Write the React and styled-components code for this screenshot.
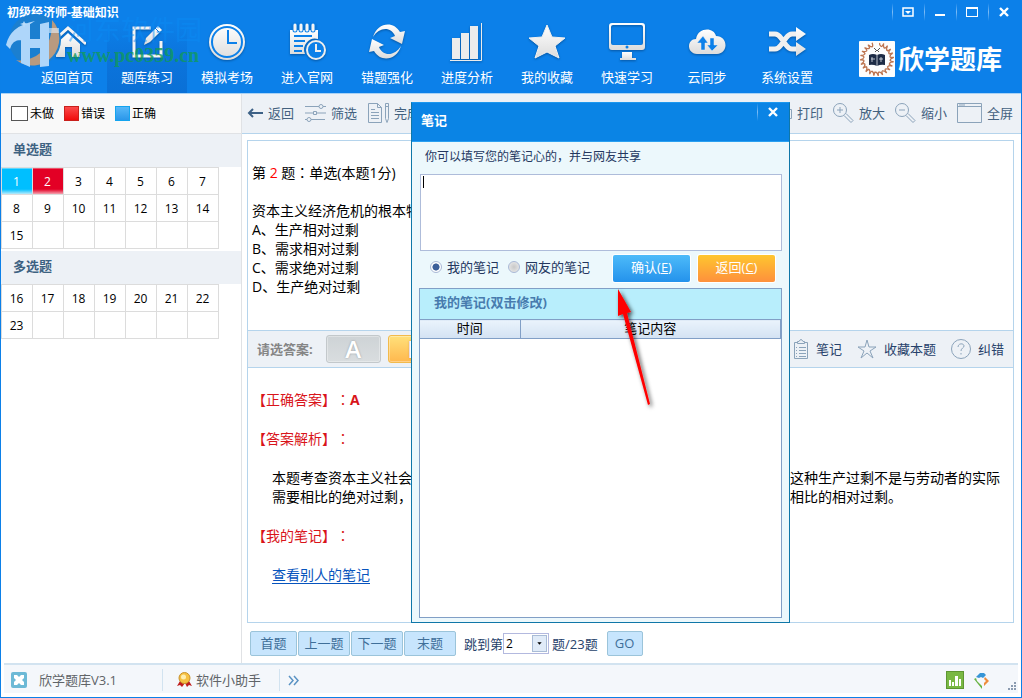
import React, { useState } from "react";
import styled, { createGlobalStyle, css } from "styled-components";

const GlobalStyle = createGlobalStyle`
  * {
    box-sizing: border-box;
  }
  body {
    margin: 0;
    background: #fff;
    color: #000;
    font-family: "Open Sans", "Noto Sans CJK SC", sans-serif;
    font-size: 13px;
    line-height: 18px;
    text-spacing-trim: space-all;
  }
  button, input, select, textarea {
    font: inherit;
    color: inherit;
    margin: 0;
  }
  button {
    padding: 0;
    border: 0;
    background: none;
    white-space: nowrap;
  }
`;

/* ---------- frame and header ---------- */

const Frame = styled.div`
  position: relative;
  display: flex;
  flex-direction: column;
  min-height: 100vh;
  border: solid #0c80e8;
  border-width: 0 1px 1px;
  overflow: hidden;
`;

const Header = styled.header`
  position: relative;
  background: #0c80e9;
  color: #fff;
  border-bottom: 1px solid #a9d2f5;
`;

const TitleBar = styled.div`
  display: flex;
  justify-content: space-between;
  height: 23px;
  padding: 0 1px 0 6px;
`;

const AppTitle = styled.h1`
  margin: 0;
  padding-top: 4px;
  font-size: 12px;
  line-height: 18px;
  font-weight: 700;
`;

const WindowControls = styled.div`
  display: flex;
`;

const ControlButton = styled.button`
  position: relative;
  width: 32px;
  height: 23px;
  display: grid;
  place-items: center;
  background: linear-gradient(#0c80e900, #7fbdf6 50%, #0c80e900) left center /
    1px 18px no-repeat;
`;

const NavRow = styled.nav`
  display: flex;
  align-items: stretch;
  padding-left: 26px;
  height: 70px;
`;

const NavButton = styled.button`
  width: 80px;
  display: flex;
  flex-direction: column;
  align-items: center;
  gap: 7px;
  ${(props) =>
    props.$active &&
    css`
      background: linear-gradient(#0c80e9, #0b74dc 50%, #0a70d6);
    `}

  svg {
    filter: drop-shadow(0 1px 1px #0656a3);
  }
`;

const Brand = styled.div`
  margin-left: auto;
  padding: 2px 19px 0 0;
  display: flex;
  align-items: center;
  gap: 3px;
  font-size: 26px;
  line-height: 36px;
  font-weight: 700;
  white-space: nowrap;
`;

const Watermark = styled.div`
  position: absolute;
  left: 4px;
  top: 12px;
  display: flex;
  align-items: center;
  gap: 4px;
  pointer-events: none;
`;

const WatermarkText = styled.div`
  display: flex;
  flex-direction: column;
  padding-top: 4px;
  font-size: 27px;
  line-height: 27px;
  color: #0a8cf577;
  white-space: nowrap;
`;

const WatermarkUrl = styled.span`
  font-family: "Liberation Serif", serif;
  font-size: 20px;
  line-height: 25px;
  font-weight: 700;
  color: #109a5acc;
`;

/* ---------- sidebar ---------- */

const Body = styled.div`
  flex: 1;
  display: grid;
  grid-template-columns: 241px minmax(0, 1fr);
`;

const Sidebar = styled.aside`
  border-right: 1px solid #e0e2e5;
`;

const Legend = styled.div`
  display: flex;
  align-items: center;
  gap: 10px;
  height: 40px;
  padding-left: 10px;
  background: #f9f9f9;
  border-bottom: 1px solid #e0e2e5;
  font-size: 12px;
`;

const LegendItem = styled.span`
  display: flex;
  align-items: center;
  gap: 2px;
`;

const swatches = {
  todo: "background: #fff; border-color: #555; width: 17px;",
  wrong: "background: linear-gradient(#fb4a4a, #f00c0c); border-color: #c8201c;",
  right: "background: linear-gradient(#58b8f8, #2a97ea); border-color: #14a4ef;",
};

const Swatch = styled.i`
  width: 15px;
  height: 15px;
  border: 1px solid;
  ${(props) => swatches[props.$kind]}
`;

const GroupTitle = styled.h2`
  margin: 0;
  padding: 0 12px;
  height: 33px;
  background: #edf1f6;
  color: #3d6282;
  font-size: 13px;
  line-height: 30px;
  font-weight: 700;
`;

const NumberTable = styled.table`
  border-collapse: collapse;
  margin-bottom: 2px;
`;

const cellStates = {
  right: "background: linear-gradient(#00bfff 80%, #c9f0fd); color: #fff;",
  wrong: "background: linear-gradient(#e30025 80%, #f7b4bf); color: #fff;",
};

const NumberCell = styled.td`
  width: 31px;
  height: 27px;
  padding: 1px 1px 0 0;
  border: 1px solid #dcdcdc;
  text-align: center;
  font-size: 12px;
  ${(props) => cellStates[props.$state]}
`;

/* ---------- main area ---------- */

const Main = styled.main`
  display: flex;
  flex-direction: column;
`;

const Toolbar = styled.div`
  display: flex;
  align-items: center;
  justify-content: space-between;
  height: 40px;
  padding: 0 8px 2px 5px;
  background: #edf1f6;
  border-bottom: 1px solid #b5d4ec;
`;

const ToolGroup = styled.div`
  display: flex;
  align-items: center;
  gap: ${(props) => props.$gap}px;
`;

const ToolButton = styled.button`
  display: flex;
  align-items: center;
  gap: 5px;
  color: #43617f;
`;

const Paper = styled.section`
  flex: 1;
  display: flex;
  flex-direction: column;
  margin: 6px 7px 8px 5px;
  border: 1px solid #b5d4ec;
`;

const Question = styled.div`
  height: 189px;
  padding: 22px 8px 0 4px;
  font-size: 14px;
  line-height: 19px;
  white-space: nowrap;
  overflow: hidden;
`;

const QuestionTitle = styled.p`
  margin: 0 0 19px;

  em {
    font-style: normal;
    color: #f00;
  }
`;

const OptionList = styled.ul`
  margin: 0;
  padding: 0;
  list-style: none;
`;

// Traditional-style colon sits in the middle of its box
const Colon = styled.span`
  font-family: "Noto Sans CJK TC", sans-serif;
`;

const AnswerBar = styled.div`
  display: flex;
  align-items: center;
  justify-content: space-between;
  height: 38px;
  padding: 0 9px;
  background: #edf1f6;
  border: solid #b5d4ec;
  border-width: 1px 0;
`;

const AnswerLabel = styled.span`
  margin-right: 6px;
  color: #858585;
  font-weight: 700;
`;

const AnswerButton = styled.button`
  width: 55px;
  height: 28px;
  border: 1px solid ${(props) => (props.$picked ? "#f2ba4c" : "#c3c8cb")};
  border-radius: 3px;
  background: ${(props) =>
    props.$picked
      ? "linear-gradient(#ffe07a, #ffb84e)"
      : "linear-gradient(#ced3d6, #d9dddf)"};
  box-shadow: inset 0 0 0 1px #ffffff55;
  color: #fff;
  font-size: 24px;
  line-height: 26px;
  font-weight: 600;
  text-shadow: 0 0 2px ${(props) => (props.$picked ? "#c98c00" : "#8f979c")};
`;

const DarkTool = styled(ToolButton)`
  gap: 7px;
  color: #27426b;
`;

const Explanation = styled.div`
  display: flex;
  flex-direction: column;
  gap: 20px;
  padding: 22px 8px 0 4px;
  font-size: 14px;
  line-height: 19px;
`;

const ExplainHead = styled.h3`
  margin: 0;
  font-size: 14px;
  font-weight: 400;
  color: #d9141a;
`;

const ExplainText = styled.p`
  margin: 0;
  padding-left: 20px;
`;

const NotesLink = styled.a`
  color: #0754bd;
  text-underline-offset: 3px;
`;

const Pager = styled.div`
  display: flex;
  align-items: center;
  gap: 1px;
  height: 25px;
  margin: 0 8px 7px;
  color: #27426b;
`;

const PagerButton = styled.button`
  width: ${(props) => props.$width || 52}px;
  height: 25px;
  padding-bottom: 2px;
  border: 1px solid #9bc4da;
  border-radius: 2px;
  background: #c7e5fd;
  color: #3f6f99;
`;

const JumpLabel = styled.label`
  display: flex;
  align-items: center;
  margin: 0 8px 0 7px;
`;

const SelectBox = styled.span`
  display: grid;
  align-items: center;
  width: 46px;
  height: 21px;
  margin-right: 3px;
  border: 1px solid #b3b9df;
  background: #fff;

  > * {
    grid-area: 1 / 1;
  }
`;

const JumpSelect = styled.select`
  appearance: none;
  width: 100%;
  height: 19px;
  padding: 0 0 0 2px;
  border: 0;
  background: none;
  color: #000;
  font-size: 12px;
  line-height: 18px;
`;

const SelectArrow = styled.svg`
  justify-self: end;
  margin-right: 1px;
  border: 1px solid #a9bcd6;
  background: #e0ebf8;
  pointer-events: none;
`;

/* ---------- status bar ---------- */

const StatusBar = styled.footer`
  display: flex;
  align-items: center;
  height: 30px;
  margin: 0 3px 4px;
  padding: 2px 1px 0 7px;
  border-top: 2px solid #d2e3f0;
  background: #f4f7fb;
  color: #606468;
`;

const StatusItem = styled.span`
  display: flex;
  align-items: center;
  gap: ${(props) => props.$gap}px;
`;

const StatusDivider = styled.i`
  width: 1px;
  height: 22px;
  margin: 0 ${(props) => props.$right}px 0 ${(props) => props.$left}px;
  background: #d2e3f0;
`;

const Tray = styled.div`
  display: flex;
  align-items: center;
  gap: 9px;
  margin-left: auto;
`;

/* ---------- note dialog ---------- */

const Dialog = styled.section`
  position: absolute;
  left: 410px;
  top: 102px;
  width: 379px;
  height: 521px;
  display: flex;
  flex-direction: column;
  border: 1px solid #0f77a8;
  border-top-color: #1c97ee;
  background: #ecf8fc;
`;

const DialogHeader = styled.header`
  display: flex;
  align-items: flex-start;
  justify-content: space-between;
  height: 39px;
  padding-left: 9px;
  background: #0a84e5;
  border-bottom: 1px solid #2aa0f0;
  color: #fff;

  h2 {
    margin: 0;
    font-size: 13px;
    line-height: 35px;
    font-weight: 700;
  }

  button {
    height: 18px;
  }
`;

const DialogBody = styled.div`
  flex: 1;
  display: flex;
  flex-direction: column;
  padding: 6px 7px 4px;
  color: #24375f;
`;

const NoteLabel = styled.label`
  padding-left: 6px;
  font-size: 12px;
`;

const NoteField = styled.div`
  position: relative;
  margin: 8px 0 4px 1px;
`;

const NoteInput = styled.textarea`
  display: block;
  width: 100%;
  height: 77px;
  padding: 2px 4px;
  border: 1px solid #aebcda;
  border-radius: 0;
  background: #fff;
  resize: none;
  outline: none;
  caret-color: transparent;
`;

const Caret = styled.i`
  position: absolute;
  left: 3px;
  top: 2px;
  width: 1px;
  height: 12px;
  background: #000;
`;

const NoteActions = styled.div`
  display: flex;
  justify-content: space-between;
  padding: 0 7px 0 11px;
  height: 33px;
`;

const RadioGroup = styled.div`
  display: flex;
  gap: 9px;
  height: 23px;
`;

const RadioLabel = styled.label`
  display: flex;
  align-items: center;
  gap: 5px;
`;

const Radio = styled.input`
  appearance: none;
  width: 12px;
  height: 12px;
  border: 1px solid #aab9d6;
  border-radius: 50%;
  background: radial-gradient(#c8c8c8, #eee);

  &:checked {
    background: radial-gradient(#3c5f99 45%, #fff 55%);
  }
`;

const ButtonPair = styled.div`
  display: flex;
  gap: 8px;
`;

const ActionButton = styled.button`
  width: 77px;
  height: 27px;
  padding-bottom: 3px;
  border-radius: 2px;
  color: #fff;
  background: ${(props) =>
    props.$warm
      ? "linear-gradient(#fec62f, #fe903c)"
      : "linear-gradient(#4dbbf9, #2492ec)"};
  box-shadow: 0 0 0 1px #fff;
`;

const NoteList = styled.div`
  flex: 1;
  border: 1px solid #819fc6;
  background: #fff;

  h3 {
    margin: 0;
    padding-left: 14px;
    height: 30px;
    background: #b8eefc;
    color: #477bae;
    font-size: 13px;
    line-height: 27px;
    font-weight: 700;
  }
`;

const NoteTable = styled.table`
  width: 100%;
  border-collapse: collapse;
  color: #000;

  th {
    height: 19px;
    padding: 0 0 2px;
    border: solid #819fc6;
    border-width: 1px 1px 1px 0;
    background: linear-gradient(#eaf3fc, #d3e2f3);
    font-weight: 400;
    line-height: 15px;
  }
  th:first-child {
    width: 100px;
  }
`;

const RedArrow = styled.svg`
  position: absolute;
  left: 606px;
  top: 284px;
  pointer-events: none;
`;

/* ---------- drawings ---------- */

const navIcons = {
  home: (
    <>
      <path d="M2 21 20 5l18 16" fill="none" strokeWidth="3" stroke="#f4f4f4" />
      <path d="M8 21 20 10l12 11v13h-8V24h-7v10H8z" />
    </>
  ),
  edit: (
    <>
      <path
        d="M23 5H6v28h27V18"
        fill="none"
        stroke="#f4f4f4"
        strokeWidth="3"
      />
      <path d="m16 22 2-7L30 3l4 4-12 12z" />
      <path d="m27 5 4 4" stroke="#0b74dc" strokeWidth="1" />
    </>
  ),
  clock: (
    <>
      <circle cx="19" cy="19" r="18" />
      <circle cx="19" cy="19" r="15" fill="none" stroke="#0c80e9" strokeWidth="2" />
      <path d="M20 7v13h9" fill="none" stroke="#0c80e9" strokeWidth="2" />
    </>
  ),
  plan: (
    <>
      <path d="M2 7h28v9a11 11 0 0 0-13 15H2z" />
      <path
        d="M7 1v6M13 1v6M19 1v6M25 1v6"
        stroke="#0c80e9"
        strokeWidth="5"
        strokeLinecap="round"
      />
      <path
        d="M7 2v5M13 2v5M19 2v5M25 2v5"
        stroke="#f4f4f4"
        strokeWidth="3"
        strokeLinecap="round"
      />
      <path
        d="M6 13h18M6 18h11M6 23h9M6 28h8"
        stroke="#0c80e9"
        strokeWidth="2"
      />
      <circle cx="28" cy="27" r="9" fill="#0c80e9" stroke="#eee" strokeWidth="2" />
      <path d="M28 21v7h5" fill="none" stroke="#eee" strokeWidth="2" />
    </>
  ),
  sync: (
    <>
      <path d="M5 14C9 0 25-3 32 9l5-1-3 13-12-6 5-2C23 3 11 4 5 14z" />
      <path d="M33 23C29 37 13 40 6 28l-5 1 3-13 12 6-5 2c4 10 16 9 22-1z" />
    </>
  ),
  bars: (
    <>
      <path d="M4 15h8v21H4zM13 10h8v26h-8zM22 3h8v33h-8z" fill="#ececec" />
      <path d="M2 37.500h31.500V0" fill="none" stroke="#ececec" />
    </>
  ),
  star: (
    <path
      d="m19 2 5 12 13 1-10 8 4 12-12-6-12 6 4-12-10-8 13-1z"
      strokeLinejoin="round"
      stroke="#f0f0f0"
    />
  ),
  screen: (
    <>
      <path
        fillRule="evenodd"
        d="M4 0h30q3 0 3 3v21q0 3-3 3H4q-3 0-3-3V3q0-3 3-3zM5 2Q3 2 3 4v16q0 2 2 2h28q2 0 2-2V4q0-2-2-2z"
      />
      <path d="M14 29h10v6h4v2H12v-2h2z" />
      <circle cx="19" cy="24" r="1.5" fill="#0c80e9" />
    </>
  ),
  cloud: (
    <>
      <path d="M9 31C-2 30-1 16 8 16 10 4 26 4 28 13c12 0 13 17 1 18z" />
      <path
        d="M13 27V20h-4l6-7 5 7h-3v7zM22 15h4v7h4l-6 6-5-6h3z"
        fill="#0c80e9"
        stroke="#eee"
        strokeWidth="0.5"
      />
    </>
  ),
  shuffle: (
    <>
      <path
        d="M1 11h6q3 0 6 4l5 7q3 4 6 4h5M1 26h6q3 0 6-4l5-7q3-4 6-4h5"
        fill="none"
        stroke="#f0f0f0"
        strokeWidth="5"
      />
      <path d="m28 4 10 7-10 7zM28 19l10 7-10 7z" />
    </>
  ),
};

const NavIcon = ({ name }) => (
  <svg width="38" height="38" viewBox="0 0 38 38" fill="url(#silver)">
    {navIcons[name]}
  </svg>
);

const toolIcons = {
  back: { w: 16, body: <path d="M16 10H2M6 6l-4 4 4 4" strokeWidth="2" stroke="#3d6186" /> },
  filter: {
    w: 21,
    body: (
      <path d="M0 3.500h14M18 3.500h3M0 10h8M12 10h9M0 16.500h2M6 16.500h14M14 3.500a2 2 0 1 0 4 0 2 2 0 1 0-4 0M8.500 8.500h3v3h-3zM2 16.500a2 2 0 1 0 4 0 2 2 0 1 0-4 0" />
    ),
  },
  paper: {
    w: 21,
    body: (
      <path d="M.5.5h9l4 4v15H.5zM9.500.5v4h4M3 6.500h4M3 9.500h8M3 12.500h8M3 15.500h8M17.500.5h3v15l-1.500 4-1.500-4zM17.500 3.500h3" />
    ),
  },
  print: { w: 21, body: <path d="M4.500 6.500v-6h12v6M.5 6.500h20v9h-4M4.500 15.500h-4v-9M4.500 12.500h12v7h-12z" /> },
  zoomIn: {
    w: 21,
    body: (
      <path d="M.5 7a6.500 6.500 0 1 0 13 0 6.500 6.500 0 1 0-13 0M4 7h6M7 4v6M11 12.500l7 7 2-2-7-7" />
    ),
  },
  zoomOut: {
    w: 21,
    body: <path d="M.5 7a6.500 6.500 0 1 0 13 0 6.500 6.500 0 1 0-13 0M4 7h6M11 12.500l7 7 2-2-7-7" />,
  },
  full: { w: 25, body: <path d="M.5.5h24v19H.5zM.5 3.500h24M2 2h6" /> },
  board: {
    w: 16,
    body: (
      <path d="M4 3.500H1.500v16h13v-16H12M4.500 2.500h1.500q2-4 4 0h1.500v2h-7zM3 8.500h1M6 8.500h7M3 11.500h1M6 11.500h7M3 14.500h1M6 14.500h7M3 17.500h1M6 17.500h7" />
    ),
  },
  star: { w: 20, body: <path d="m10 1 2 7h7l-6 4 3 7-6-5-6 5 3-7-6-4h7z" /> },
  help: {
    w: 20,
    body: (
      <path d="M.5 10a9.500 9.500 0 1 0 19 0 9.500 9.500 0 1 0-19 0M7 8c0-4 6-4 6-1 0 2-3 2-3 5M10 14v1.500" />
    ),
  },
};

const ToolIcon = ({ name }) => {
  const { w, body } = toolIcons[name];
  return (
    <svg
      width={w}
      height="20"
      viewBox={`0 0 ${w} 20`}
      fill="none"
      stroke="#8ba3ba"
      overflow="visible"
    >
      {body}
    </svg>
  );
};

const CloseIcon = () => (
  <svg width="10" height="10" viewBox="0 0 10 10" stroke="#fff" strokeWidth="2.4">
    <path d="m1 1 8 8M9 1 1 9" />
  </svg>
);

const leaves = Array.from({ length: 22 }, (_, i) => 20 + (i * 320) / 21);

const BrandLogo = () => (
  <svg width="36" height="36" viewBox="0 0 36 36">
    <rect width="36" height="36" rx="1" fill="#fdfdfd" />
    {leaves.map((deg) => (
      <path
        key={deg}
        d="M18 5q-3-1-3-3M18 5q1-1 1-4"
        transform={`rotate(${deg} 18 18)`}
        stroke="#bd7450"
        strokeWidth="1.300"
        fill="none"
      />
    ))}
    <path d="M10 14q4-2 8 0 4-2 8 0v10q-4-1-8 1-4-2-8-1z" fill="#1d2b45" />
    <path d="M18 14v11M12 18h4M13 16v5M20 18h4M22 16v5" stroke="#dfe4ec" strokeWidth=".8" />
    <path d="M15 7l3 3 3-3M16 11l2-2 2 2" stroke="#555" fill="none" />
  </svg>
);

const WatermarkLogo = () => (
  <svg width="58" height="56" viewBox="0 0 58 56">
    <circle cx="30" cy="28" r="26" fill="#1b7fd0" />
    <path d="M47 8a27 27 0 0 1-36 40q8 2 20-4Q48 34 47 8z" fill="#b89a80" />
    <path
      d="M1 33Q5 14 30 9q-12 7-14 13v6q-9 0-11 9zM16 14l9-3v16h10V12l9-2v44l-9 1V36H25v19l-9-4z"
      fill="#aed6fa"
    />
    <path d="M44 16h10v5H44z" fill="#e6f1fb" opacity=".6" />
    <path d="m19 9 1 2 3 1-3 1-1 3-1-3-3-1 3-1z" fill="#b9dcfa" />
  </svg>
);

/* ---------- content ---------- */

const navItems = [
  ["home", "返回首页"],
  ["edit", "题库练习"],
  ["clock", "模拟考场"],
  ["plan", "进入官网"],
  ["sync", "错题强化"],
  ["bars", "进度分析"],
  ["star", "我的收藏"],
  ["screen", "快速学习"],
  ["cloud", "云同步"],
  ["shuffle", "系统设置"],
];

const groups = [
  { title: "单选题", from: 1, to: 15 },
  { title: "多选题", from: 16, to: 23 },
];

const answered = { 1: "right", 2: "wrong" };

const options = [
  "A、生产相对过剩",
  "B、需求相对过剩",
  "C、需求绝对过剩",
  "D、生产绝对过剩",
];

const toRows = ({ from, to }) => {
  const count = Math.ceil((to - from + 1) / 7);
  return Array.from({ length: count }, (_, r) =>
    Array.from({ length: 7 }, (_, c) => {
      const n = from + r * 7 + c;
      return n <= to ? n : null;
    })
  );
};

const HiddenDefs = styled.svg`
  display: block;
  width: 0;
  height: 0;
`;

const AppHeader = () => (
  <Header>
    <HiddenDefs aria-hidden="true">
      <linearGradient id="silver" x1="0" y1="0" x2="0" y2="1">
        <stop offset="0" stopColor="#fff" />
        <stop offset="1" stopColor="#dcdcdc" />
      </linearGradient>
    </HiddenDefs>
    <TitleBar>
      <AppTitle>初级经济师-基础知识</AppTitle>
      <WindowControls>
        <ControlButton aria-label="菜单">
          <svg width="12" height="10" viewBox="0 0 12 10">
            <path d="M1 1h10v8H1z" fill="none" stroke="#fff" strokeWidth="1.500" />
            <path d="M3 4h6L6 7z" fill="#fff" />
          </svg>
        </ControlButton>
        <ControlButton aria-label="最小化">
          <svg width="10" height="10" viewBox="0 0 10 10">
            <path d="M0 7h10v2H0z" fill="#fff" />
          </svg>
        </ControlButton>
        <ControlButton aria-label="最大化">
          <svg width="12" height="10" viewBox="0 0 12 10">
            <path d="M0 0h12v10H0zM1 2v7h10V2z" fill="#fff" fillRule="evenodd" />
          </svg>
        </ControlButton>
        <ControlButton aria-label="关闭">
          <CloseIcon />
        </ControlButton>
      </WindowControls>
    </TitleBar>
    <NavRow>
      {navItems.map(([icon, label]) => (
        <NavButton key={icon} $active={icon === "edit"}>
          <NavIcon name={icon} />
          {label}
        </NavButton>
      ))}
      <Brand>
        <BrandLogo />
        欣学题库
      </Brand>
    </NavRow>
    <Watermark>
      <WatermarkLogo />
      <WatermarkText>
        河东软件园
        <WatermarkUrl>www.pc0359.cn</WatermarkUrl>
      </WatermarkText>
    </Watermark>
  </Header>
);

const QuestionIndex = () => (
  <Sidebar>
    <Legend>
      <LegendItem>
        <Swatch $kind="todo" />
        未做
      </LegendItem>
      <LegendItem>
        <Swatch $kind="wrong" />
        错误
      </LegendItem>
      <LegendItem>
        <Swatch $kind="right" />
        正确
      </LegendItem>
    </Legend>
    {groups.map((group) => (
      <React.Fragment key={group.title}>
        <GroupTitle>{group.title}</GroupTitle>
        <NumberTable>
          <tbody>
            {toRows(group).map((row, r) => (
              <tr key={r}>
                {row.map((n, c) => (
                  <NumberCell key={c} $state={answered[n]}>
                    {n}
                  </NumberCell>
                ))}
              </tr>
            ))}
          </tbody>
        </NumberTable>
      </React.Fragment>
    ))}
  </Sidebar>
);

const Tool = ({ icon, label, as: Button = ToolButton }) => (
  <Button>
    <ToolIcon name={icon} />
    {label}
  </Button>
);

const NoteDialog = () => {
  const [scope, setScope] = useState("mine");
  return (
    <Dialog role="dialog" aria-labelledby="note-title">
      <DialogHeader>
        <h2 id="note-title">笔记</h2>
        <ControlButton aria-label="关闭笔记">
          <CloseIcon />
        </ControlButton>
      </DialogHeader>
      <DialogBody>
        <NoteLabel htmlFor="note">你可以填写您的笔记心的，并与网友共享</NoteLabel>
        <NoteField>
          <NoteInput id="note" />
          <Caret />
        </NoteField>
        <NoteActions>
          <RadioGroup>
            <RadioLabel>
              <Radio
                type="radio"
                name="scope"
                checked={scope === "mine"}
                onChange={() => setScope("mine")}
              />
              我的笔记
            </RadioLabel>
            <RadioLabel>
              <Radio
                type="radio"
                name="scope"
                checked={scope === "friends"}
                onChange={() => setScope("friends")}
              />
              网友的笔记
            </RadioLabel>
          </RadioGroup>
          <ButtonPair>
            <ActionButton>
              确认(<u>E</u>)
            </ActionButton>
            <ActionButton $warm>
              返回(<u>C</u>)
            </ActionButton>
          </ButtonPair>
        </NoteActions>
        <NoteList>
          <h3>我的笔记(双击修改)</h3>
          <NoteTable>
            <thead>
              <tr>
                <th>时间</th>
                <th>笔记内容</th>
              </tr>
            </thead>
          </NoteTable>
        </NoteList>
      </DialogBody>
    </Dialog>
  );
};

const Status = () => (
  <StatusBar>
    <StatusItem $gap={12}>
      <svg width="16" height="16" viewBox="0 0 16 16">
        <rect width="16" height="16" rx="2" fill="#6cb9d6" />
        <path d="M3 3h3l2 2 2-2h3v3l-2 2 2 2v3h-3l-2-2-2 2H3v-3l2-2-2-2z" fill="#fff" />
      </svg>
      欣学题库V3.1
    </StatusItem>
    <StatusDivider $left={45} $right={14} />
    <StatusItem $gap={4}>
      <svg width="15" height="16" viewBox="0 0 15 16">
        <path d="M3 9 0 14l3-1 2 2 3-4 2 4 2-2 3 1-3-5z" fill="#c01d1d" />
        <circle cx="7.500" cy="6" r="5.500" fill="#f6c142" stroke="#c8922b" />
        <circle cx="6.500" cy="5" r="2.500" fill="#fdeeb0" />
      </svg>
      软件小助手
    </StatusItem>
    <StatusDivider $left={18} $right={8} />
    <svg width="11" height="11" viewBox="0 0 11 11" fill="none" stroke="#5a93c4" strokeWidth="1.500">
      <path d="m1 1 4 4.500L1 10M6 1l4 4.500L6 10" />
    </svg>
    <Tray>
      <svg width="18" height="18" viewBox="0 0 18 18">
        <rect x=".5" y=".5" width="17" height="17" fill="#79b843" stroke="#5e9632" />
        <path d="M3 9h2v6H3zM6 11h2v4H6zM9 5h3v10H9zM13 8h2v7h-2z" fill="#fff" />
      </svg>
      <svg width="17" height="17" viewBox="0 0 17 17">
        <path d="m3 5 4-4h4l2 2-3 3-2-1-2 1z" fill="#3795d6" />
        <path d="m12 5 4 4-5 5v-3l2-2-2-2z" fill="#ee8c3c" />
        <path d="m1 7 2-1 1 3 5 5v3z" fill="#68b343" />
      </svg>
      <svg width="18" height="26" viewBox="0 0 18 26" fill="#8b9bb0">
        <path d="M15 15h2v2h-2zM12 18h2v2h-2zM15 18h2v2h-2zM9 21h2v2H9zM12 21h2v2h-2zM15 21h2v2h-2z" />
      </svg>
    </Tray>
  </StatusBar>
);

export default function App() {
  const [current, setCurrent] = useState(2);

  return (
    <>
      <GlobalStyle />
      <Frame>
        <AppHeader />
        <Body>
          <QuestionIndex />
          <Main>
            <Toolbar>
              <ToolGroup $gap={11}>
                <Tool icon="back" label="返回" />
                <Tool icon="filter" label="筛选" />
                <Tool icon="paper" label="完成" />
              </ToolGroup>
              <ToolGroup $gap={10}>
                <Tool icon="print" label="打印" />
                <Tool icon="zoomIn" label="放大" />
                <Tool icon="zoomOut" label="缩小" />
                <Tool icon="full" label="全屏" />
              </ToolGroup>
            </Toolbar>
            <Paper>
              <Question>
                <QuestionTitle>
                  第 <em>{current}</em> 题<Colon>：</Colon>单选(本题1分)
                </QuestionTitle>
                资本主义经济危机的根本特征是
                <OptionList>
                  {options.map((option) => (
                    <li key={option}>{option}</li>
                  ))}
                </OptionList>
              </Question>
              <AnswerBar>
                <ToolGroup $gap={7}>
                  <AnswerLabel>请选答案:</AnswerLabel>
                  <AnswerButton>A</AnswerButton>
                  <AnswerButton $picked>B</AnswerButton>
                </ToolGroup>
                <ToolGroup $gap={15}>
                  <Tool as={DarkTool} icon="board" label="笔记" />
                  <Tool as={DarkTool} icon="star" label="收藏本题" />
                  <Tool as={DarkTool} icon="help" label="纠错" />
                </ToolGroup>
              </AnswerBar>
              <Explanation>
                <ExplainHead>
                  【正确答案】<Colon>：</Colon>
                  <b>A</b>
                </ExplainHead>
                <ExplainHead>
                  【答案解析】<Colon>：</Colon>
                </ExplainHead>
                <ExplainText>
                  本题考查资本主义社会的经济危机。资本主义经济危机的基本特征是生产相对过剩，这种生产过剩不是与劳动者的实际需要相比的绝对过剩，而是指所生产的商品与劳动人民有货币支付能力的有限的需求相比的相对过剩。
                </ExplainText>
                <ExplainHead>
                  【我的笔记】<Colon>：</Colon>
                </ExplainHead>
                <ExplainText>
                  <NotesLink href="#notes">查看别人的笔记</NotesLink>
                </ExplainText>
              </Explanation>
            </Paper>
            <Pager>
              <PagerButton $width={47}>首题</PagerButton>
              <PagerButton>上一题</PagerButton>
              <PagerButton>下一题</PagerButton>
              <PagerButton>末题</PagerButton>
              <JumpLabel>
                跳到第
                <SelectBox>
                  <JumpSelect
                    value={current}
                    onChange={(e) => setCurrent(Number(e.target.value))}
                  >
                    {Array.from({ length: 23 }, (_, i) => (
                      <option key={i} value={i + 1}>
                        {i + 1}
                      </option>
                    ))}
                  </JumpSelect>
                  <SelectArrow width="15" height="17" viewBox="0 0 15 17">
                    <path d="M5 7h5L7.500 10z" />
                  </SelectArrow>
                </SelectBox>
                题/23题
              </JumpLabel>
              <PagerButton $width={36}>GO</PagerButton>
            </Pager>
          </Main>
        </Body>
        <Status />
        <NoteDialog />
        <RedArrow width="56" height="132" viewBox="0 0 56 132">
          <defs>
            <filter id="arrowShadow" x="-50%" y="-20%" width="200%" height="140%">
              <feDropShadow dx="2" dy="2" stdDeviation="2" floodOpacity=".7" />
            </filter>
          </defs>
          <path
            d="M11 5 24 28l-4 1 23 91-2 1L16 30l-5 2z"
            fill="#fe0000"
            filter="url(#arrowShadow)"
          />
        </RedArrow>
      </Frame>
    </>
  );
}
